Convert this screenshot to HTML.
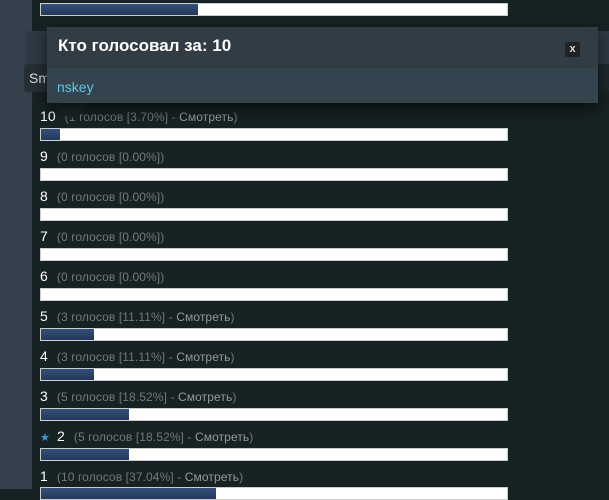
<!DOCTYPE html><html><head><style>
body{margin:0;width:609px;height:489px;overflow:hidden;background:#172224;font-family:"Liberation Sans",sans-serif;position:relative}
.left{position:absolute;left:0;top:0;width:32px;height:489px;background:#34414d}
.band1{position:absolute;left:27px;top:31px;width:582px;height:33px;background:#2c3a45}
.band2{position:absolute;left:27px;top:64px;width:582px;height:27px;background:#1c282d}
.tab{position:absolute;left:24px;top:64px;width:60px;height:28px;background:#262f36;border-radius:3px;color:#ddd;font-size:14px;line-height:28px;padding-left:5px}
.bar{position:absolute;left:40px;width:466px;height:11px;background:#fff;border:1px solid #ccc}
.bar i{display:block;height:11px;background:linear-gradient(#34507a,#24395a)}
.row{position:absolute;left:40px;font-size:12px;color:#777;letter-spacing:0.1px}
.row b{font-weight:normal;color:#fff;font-size:14px;margin-right:9px}
.row span{color:#999}
.dlg{position:absolute;left:47px;top:27px;width:551px;height:76px;box-shadow:0 6px 14px rgba(0,0,0,.6)}
.dh{height:41px;background:#323c45;color:#fff;font-weight:bold;font-size:17px;line-height:38px;padding-left:11px;position:relative}
.x{position:absolute;right:18px;top:15px;width:15px;height:15px;background:#222;border-radius:2px;color:#ddd;font-size:11px;line-height:14px;text-align:center}
.db{height:35px;background:#34444f;color:#5ec8e0;font-size:14px;line-height:38px;padding-left:10px}
.arrow{position:absolute;left:52px;top:103px;border:18px solid transparent;border-top:17px solid #1c272b;border-bottom:0}
</style></head><body>
<div class="left"></div>
<div class="bar" style="top:3px"><i style="width:157px"></i></div>
<div class="band1"></div><div class="band2"></div>
<div class="tab">Sm</div>
<div class="row" style="top:108px"><b>10</b>(1 голосов [3.70%] - <span>Смотреть</span>)</div>
<div class="bar" style="top:128px"><i style="width:19px"></i></div>
<div class="row" style="top:148px"><b>9</b>(0 голосов [0.00%])</div>
<div class="bar" style="top:168px"><i style="width:0"></i></div>
<div class="row" style="top:188px"><b>8</b>(0 голосов [0.00%])</div>
<div class="bar" style="top:208px"><i style="width:0"></i></div>
<div class="row" style="top:228px"><b>7</b>(0 голосов [0.00%])</div>
<div class="bar" style="top:248px"><i style="width:0"></i></div>
<div class="row" style="top:268px"><b>6</b>(0 голосов [0.00%])</div>
<div class="bar" style="top:288px"><i style="width:0"></i></div>
<div class="row" style="top:308px"><b>5</b>(3 голосов [11.11%] - <span>Смотреть</span>)</div>
<div class="bar" style="top:328px"><i style="width:53px"></i></div>
<div class="row" style="top:348px"><b>4</b>(3 голосов [11.11%] - <span>Смотреть</span>)</div>
<div class="bar" style="top:368px"><i style="width:53px"></i></div>
<div class="row" style="top:388px"><b>3</b>(5 голосов [18.52%] - <span>Смотреть</span>)</div>
<div class="bar" style="top:408px"><i style="width:88px"></i></div>
<div class="row" style="top:428px"><span style="color:#3a9be0;font-size:11px;margin-right:7px">★</span><b>2</b>(5 голосов [18.52%] - <span>Смотреть</span>)</div>
<div class="bar" style="top:448px"><i style="width:88px"></i></div>
<div class="row" style="top:468px"><b>1</b>(10 голосов [37.04%] - <span>Смотреть</span>)</div>
<div class="bar" style="top:487px"><i style="width:175px"></i></div>
<div class="arrow"></div>
<div class="dlg"><div class="dh">Кто голосовал за: 10<div class="x">x</div></div><div class="db">nskey</div></div>
</body></html>
